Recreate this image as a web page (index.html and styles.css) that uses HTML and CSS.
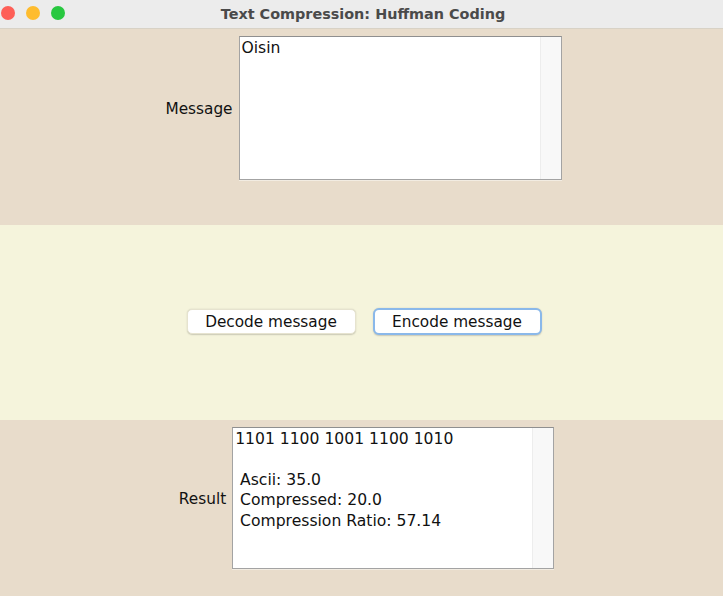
FILE: index.html
```html
<!DOCTYPE html>
<html>
<head>
<meta charset="utf-8">
<link rel="stylesheet" href="styles.css">
</head>
<body>
<div class="window">
  <div class="titlebar">
    <div class="lights">
      <span class="light red"></span>
      <span class="light yellow"></span>
      <span class="light green"></span>
    </div>
    <div class="title">Text Compression: Huffman Coding</div>
  </div>
  <div class="panel top">
    <div class="field message-field">
      <div class="label">Message</div>
      <div class="textbox message-box">
        <div class="text">Oisin</div>
        <div class="scrollbar"></div>
      </div>
    </div>
  </div>
  <div class="panel middle">
    <div class="buttons">
      <button class="btn">Decode message</button>
      <button class="btn focused">Encode message</button>
    </div>
  </div>
  <div class="panel bottom">
    <div class="field result-field">
      <div class="label">Result</div>
      <div class="textbox result-box">
        <div class="text result-text">1101 1100 1001 1100 1010

 Ascii: 35.0
 Compressed: 20.0
 Compression Ratio: 57.14</div>
        <div class="scrollbar"></div>
      </div>
    </div>
  </div>
</div>
</body>
</html>
```
FILE: styles.css
```css
html, body {
  margin: 0;
  padding: 0;
  width: 723px;
  height: 596px;
  overflow: hidden;
}
body {
  font-family: "DejaVu Sans", sans-serif;
  font-size: 15.3px;
  color: #111;
}
.window {
  display: flex;
  flex-direction: column;
  height: 596px;
}
.titlebar {
  height: 28px;
  background: #ececec;
  border-bottom: 1px solid #d8d2c6;
  display: flex;
  align-items: center;
  position: relative;
}
.lights {
  display: flex;
  gap: 11px;
  padding-left: 1px;
  position: absolute;
  left: 0;
  top: 6px;
}
.light {
  width: 14px;
  height: 14px;
  border-radius: 50%;
  display: block;
}
.red { background: #fe5f57; }
.yellow { background: #febc2e; }
.green { background: #28c840; }
.title {
  flex: 1;
  text-align: center;
  font-family: "DejaVu Sans", sans-serif;
  font-weight: 700;
  font-size: 14.4px;
  color: #4a4a4a;
  padding-left: 3px;
}
.panel {
  display: flex;
  justify-content: center;
}
.top {
  height: 196px;
  background: #e8dccb;
  align-items: flex-start;
  padding-top: 7px;
  box-sizing: border-box;
}
.middle {
  height: 195px;
  background: #f5f4dc;
  align-items: center;
}
.bottom {
  flex: 1;
  background: #e8dccb;
  align-items: flex-start;
  padding-top: 7px;
  box-sizing: border-box;
}
.field {
  display: flex;
  align-items: center;
  gap: 6px;
}
.message-field { margin-left: 4px; }
.result-field { margin-left: 10px; }
.label {
  font-size: 15.3px;
  color: #111;
  padding-top: 2px;
}
.textbox {
  background: #fff;
  border: 1px solid #a3a3a3;
  border-top-color: #8f8f8f;
  box-shadow: 0 1px 0 #f2ece2;
  display: flex;
  position: relative;
}
.message-box {
  width: 321px;
  height: 142px;
}
.result-box {
  width: 320px;
  height: 140px;
}
.text {
  flex: 1;
  white-space: pre;
  padding: 1px 0 0 2px;
  line-height: 20px;
  font-size: 15.6px;
}
.result-text {
  line-height: 20.4px;
  padding-top: 1px;
}
.scrollbar {
  width: 20px;
  background: #f8f8f8;
  border-left: 1px solid #ededed;
}
.buttons {
  display: flex;
  gap: 17px;
  margin-left: 5px;
  margin-top: -2px;
}
.btn {
  font-family: "DejaVu Sans", sans-serif;
  font-size: 15.3px;
  color: #111;
  background: #fff;
  border: 1px solid #e6e3cf;
  border-radius: 5px;
  height: 25px;
  width: 169px;
  padding: 1px 0 0;
  box-shadow: 0 0.5px 1.5px rgba(0,0,0,0.18);
}
.btn.focused {
  border: 2px solid #8ab8ea;
  width: 169px;
  height: 27px;
  margin-top: -1px;
  border-radius: 6px;
}
```
